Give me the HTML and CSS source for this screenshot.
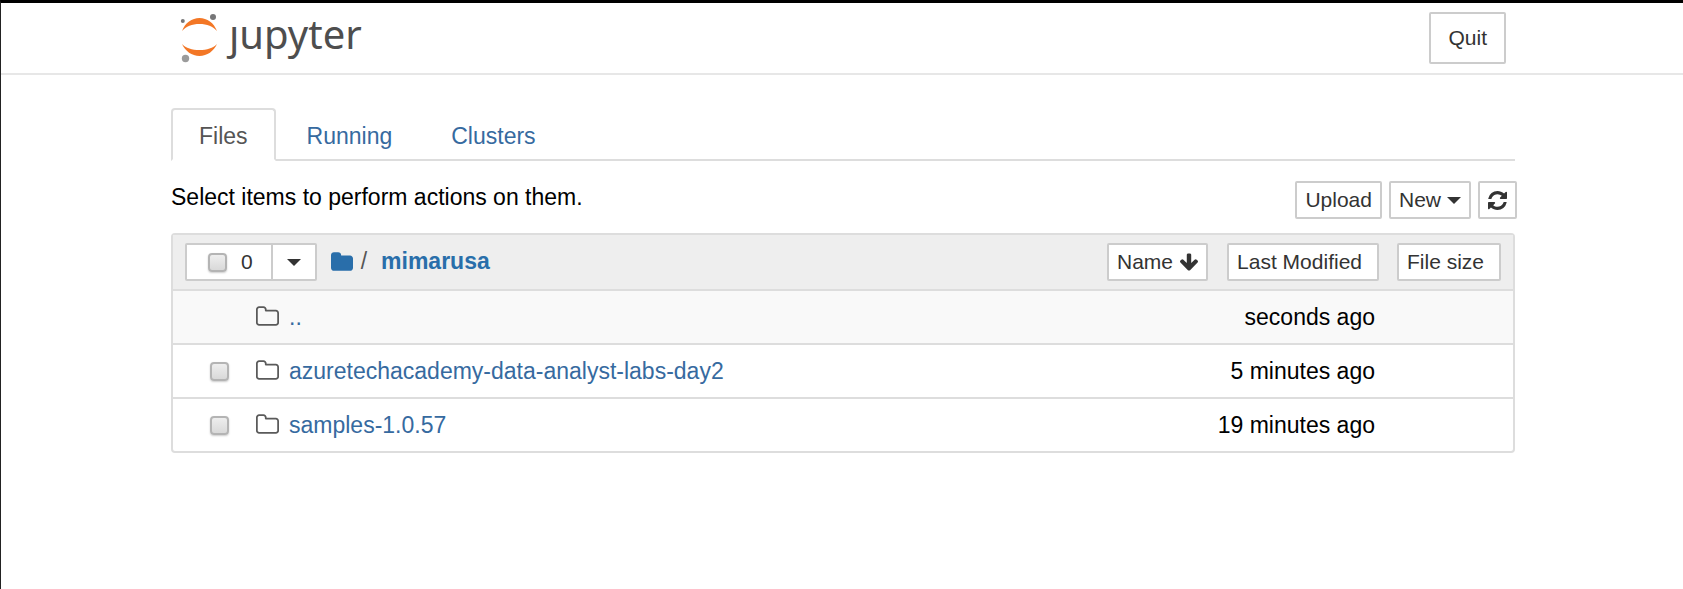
FILE: index.html
```html
<!DOCTYPE html>
<html lang="en">
<head>
<meta charset="utf-8">
<title>Jupyter</title>
<link rel="stylesheet" href="styles.css">
</head>
<body>
<svg class="sprite" aria-hidden="true">
  <symbol id="folder" viewBox="0 128 1664 1408"><path d="M1664 608v704q0 92-66 158t-158 66h-1216q-92 0-158-66t-66-158v-960q0-92 66-158t158-66h320q92 0 158 66t66 158v32h672q92 0 158 66t66 158z"/></symbol>
  <symbol id="folder-o" viewBox="0 128 1664 1408"><path d="M1536 1312v-704q0-40-28-68t-68-28h-704q-40 0-68-28t-28-68v-64q0-40-28-68t-68-28h-320q-40 0-68 28t-28 68v960q0 40 28 68t68 28h1216q40 0 68-28t28-68zm128-704v704q0 92-66 158t-158 66h-1216q-92 0-158-66t-66-158v-960q0-92 66-158t158-66h320q92 0 158 66t66 158v32h672q92 0 158 66t66 158z"/></symbol>
</svg>
<header class="header">
  <div class="container header-row">
    <a class="logo" href="#">
      <svg class="logo-mark" width="38" height="50" viewBox="0 0 38 50" aria-hidden="true">
        <path fill="#f37726" d="M1 18C4 10 11 5 18.500 5S33 10 36 18C32 13.500 26 11 18.500 11S5 13.500 1 18z"/>
        <path fill="#f37726" d="M1 31C4 38 11 43 18.500 43S33 38 36 31C32 35 26 37 18.500 37S5 35 1 31z"/>
        <circle cx="32" cy="4" r="3" fill="#767677"/>
        <circle cx="1.800" cy="8" r="2" fill="#767677"/>
        <circle cx="4.500" cy="45.500" r="3.700" fill="#9b9b9b"/>
      </svg>
      <span class="logo-text">ȷupyter</span>
    </a>
    <button class="btn quit" type="button">Quit</button>
  </div>
</header>
<main class="container">
  <nav class="tabs">
    <a class="tab active" href="#">Files</a>
    <a class="tab" href="#">Running</a>
    <a class="tab" href="#">Clusters</a>
  </nav>
  <div class="toolbar">
    <span>Select items to perform actions on them.</span>
    <div class="actions">
      <button class="btn" type="button">Upload</button>
      <button class="btn" type="button">New<span class="caret"></span></button>
      <button class="btn" type="button" aria-label="Refresh">
        <svg width="19" height="19" viewBox="0 0 1536 1536" fill="currentColor"><path d="M1511 928q0 5-1 7-64 268-268 434.500t-478 166.500q-146 0-282.500-55t-243.500-157l-129 129q-19 19-45 19t-45-19-19-45v-448q0-26 19-45t45-19h448q26 0 45 19t19 45-19 45l-137 137q71 66 161 102t187 36q134 0 250-65t186-179q11-17 53-117 8-23 30-23h192q13 0 22.500 9.500t9.500 22.500zm25-800v448q0 26-19 45t-45 19h-448q-26 0-45-19t-19-45 19-45l138-138q-148-137-349-137-134 0-250 65t-186 179q-11 17-53 117-8 23-30 23h-199q-13 0-22.500-9.500t-9.500-22.500v-7q65-268 270-434.500t480-166.500q146 0 284 55.500t245 156.500l130-129q19-19 45-19t45 19 19 45z"/></svg>
      </button>
    </div>
  </div>
  <table class="files">
    <thead>
      <tr>
        <th>
          <div class="list-head">
            <div class="selector">
              <label class="select-all"><input class="check" type="checkbox"><span>0</span></label>
              <button class="select-menu" type="button" aria-label="Select by type"><span class="caret"></span></button>
            </div>
            <div class="crumbs">
              <a class="crumb-root" href="#" aria-label="Home"><svg width="22" height="19"><use href="#folder"/></svg></a>
              <span class="slash">/</span>
              <a class="crumb" href="#">mimarusa</a>
            </div>
            <button class="btn" type="button">Name
              <svg class="sort" width="18" height="18" viewBox="53 128 1558 1483" fill="currentColor" aria-hidden="true"><path d="M1611 832q0 53-37 90l-651 652q-39 37-91 37-53 0-90-37l-651-652q-38-36-38-90 0-53 38-91l74-75q39-37 91-37 53 0 90 37l294 294v-704q0-52 38-90t90-38h128q52 0 90 38t38 90v704l294-294q37-37 90-37 52 0 91 37l75 75q37 39 37 91z"/></svg>
            </button>
          </div>
        </th>
        <th class="col-time"><button class="btn sort-btn" type="button">Last Modified</button></th>
        <th class="col-size"><button class="btn sort-btn" type="button">File size</button></th>
      </tr>
    </thead>
    <tbody>
      <tr class="parent">
        <td><div class="item"><span class="check-slot"></span><svg class="item-icon" width="23" height="20"><use href="#folder-o"/></svg><a href="#">..</a></div></td>
        <td class="time">seconds ago</td>
        <td></td>
      </tr>
      <tr>
        <td><div class="item"><span class="check-slot"><input class="check" type="checkbox" aria-label="Select azuretechacademy-data-analyst-labs-day2"></span><svg class="item-icon" width="23" height="20"><use href="#folder-o"/></svg><a href="#">azuretechacademy-data-analyst-labs-day2</a></div></td>
        <td class="time">5 minutes ago</td>
        <td></td>
      </tr>
      <tr>
        <td><div class="item"><span class="check-slot"><input class="check" type="checkbox" aria-label="Select samples-1.0.57"></span><svg class="item-icon" width="23" height="20"><use href="#folder-o"/></svg><a href="#">samples-1.0.57</a></div></td>
        <td class="time">19 minutes ago</td>
        <td></td>
      </tr>
    </tbody>
  </table>
</main>
</body>
</html>
```
FILE: styles.css
```css
* { box-sizing: border-box; }

body {
  margin: 0;
  min-height: 100vh;
  border-top: 3px solid #000;
  border-left: 1px solid #222;
  background: #fff;
  color: #000;
  font: 23px/32px "Liberation Sans", Arial, sans-serif;
}

a { color: #366a9f; text-decoration: none; }

.sprite { position: absolute; width: 0; height: 0; }

.container {
  max-width: 1346px;
  margin: 0 auto;
  padding-left: 2px;
}

.header { border-bottom: 2px solid #e7e7e7; }

.header-row {
  display: flex;
  align-items: center;
  justify-content: space-between;
  height: 70px;
  padding: 0 9px 0 12px;
}

.logo { display: flex; align-items: center; gap: 10px; color: #4e4e4e; }
.logo-mark { overflow: visible; }
.logo-text { padding-bottom: 8px; font: 40px/56px "Noto Sans", sans-serif; }

.btn {
  display: flex;
  align-items: center;
  height: 38px;
  padding: 0 8px;
  border: 2px solid #ccc;
  border-radius: 2px;
  background: #fff;
  color: #333;
  font: 21px/30px "Liberation Sans", Arial, sans-serif;
}

.quit { height: 52px; padding: 0 17px; }

.caret {
  border: 7px solid transparent;
  border-top-color: currentColor;
  border-bottom: 0;
}

.btn .caret { margin-left: 6px; }

.tabs {
  display: flex;
  gap: 3px;
  margin-top: 33px;
  border-bottom: 2px solid #ddd;
}

.tab {
  margin-bottom: -2px;
  padding: 10px 26px 7px;
  border: 2px solid transparent;
  border-radius: 4px 4px 0 0;
}

.tab.active {
  border-color: #ddd;
  border-bottom-color: #fff;
  background: #fff;
  color: #555;
}

.toolbar {
  display: flex;
  align-items: flex-start;
  justify-content: space-between;
  margin: 20px 0 14px;
}

.actions { display: flex; gap: 7px; margin-right: -2px; }

.files {
  width: 100%;
  border: 2px solid #ddd;
  border-radius: 4px;
  border-spacing: 0;
}

.files th, .files td { padding: 0; text-align: left; font-weight: normal; }
.files th { height: 54px; background: #eee; }
.files td { height: 54px; border-top: 2px solid #ddd; }
.col-time { width: 171px; }
.col-size { width: 134px; }
.col-time .btn { margin-left: auto; }
.col-size .btn { margin: 0 12px 0 auto; }
.files .sort-btn { padding-right: 15px; }

.list-head { display: flex; align-items: center; padding-left: 12px; }

.selector {
  display: flex;
  height: 38px;
  border: 2px solid #ccc;
  border-radius: 2px;
  background: #fff;
}

.select-all {
  display: flex;
  align-items: center;
  gap: 14px;
  padding: 0 18px 0 21px;
  color: #333;
  font-size: 21px;
}

.select-menu {
  display: flex;
  align-items: center;
  padding: 0 14px;
  border: 0;
  border-left: 2px solid #ccc;
  background: none;
  color: #333;
}

.check {
  appearance: none;
  width: 19px;
  height: 19px;
  margin: 0;
  border: 2px solid #b4b4b4;
  border-radius: 4px;
  background: linear-gradient(#eee, #d9d9d9);
  box-shadow: 0 1px 2px #ccc;
}

.crumbs { display: flex; align-items: center; flex: 1; padding: 0 0 2px 14px; }
.crumb-root { display: flex; fill: #296eaa; }
.slash { margin: 0 14px 0 8px; color: #555; }
.crumb { color: #296eaa; font-weight: bold; }
.sort { margin-left: 7px; }

.item { display: flex; align-items: center; }
.check-slot { display: flex; width: 83px; padding-left: 37px; }
.item-icon { margin: 0 10px 2px 0; fill: #5a5a5a; }
.parent td { background: #f9f9f9; }
.files .time { padding-right: 4px; text-align: right; white-space: nowrap; }
```
